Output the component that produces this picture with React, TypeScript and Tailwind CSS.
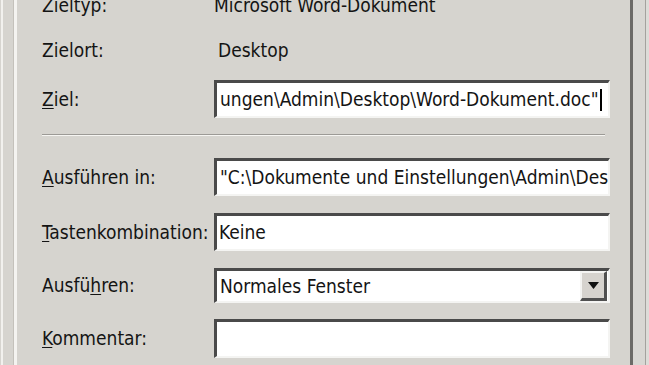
const font = { fontFamily: "'DejaVu Sans Condensed', 'Liberation Sans', sans-serif" };

function Field({ children, combo }: { children?: React.ReactNode; combo?: boolean }) {
  return (
    <div className="flex h-full w-[396px] items-center overflow-hidden border-t-[3px] border-l-[3px] border-r-2 border-b-2 border-t-[#4a4a4a] border-l-[#4a4a4a] border-r-[#f4f4f2] border-b-[#f4f4f2] bg-white">
      <div className="flex min-w-0 flex-1 items-center overflow-hidden whitespace-nowrap pl-[2px]">{children}</div>
      {combo && (
        <div className="mr-[1px] flex h-[30px] w-[27px] shrink-0 items-center justify-center border-t-2 border-l-2 border-r-[3px] border-b-[3px] border-t-[#f4f4f2] border-l-[#f4f4f2] border-r-[#505050] border-b-[#505050] bg-[#d6d3ce]">
          <svg width="11" height="7" viewBox="0 0 11 7">
            <path d="M0 0h11L5.5 7z" fill="#111" />
          </svg>
        </div>
      )}
    </div>
  );
}

function Row({ label, className, children }: { label: React.ReactNode; className: string; children: React.ReactNode }) {
  return (
    <div className={`flex items-center ${className}`}>
      <div className="w-[172px] shrink-0 whitespace-nowrap">{label}</div>
      {children}
    </div>
  );
}

export default function App() {
  return (
    <div
      className="flex h-[365px] w-[649px] overflow-hidden bg-[#d6d4cf] text-[19px] text-[#141414]"
      style={font}
    >
      {/* left frame lines */}
      <div className="ml-[1px] w-[2px] bg-[#f2f1ee]" />
      <div className="ml-[10px] w-[1px] bg-[#c4c1bb]" />
      <div className="w-[3px] bg-[#f4f3f0]" />

      <div className="ml-[25px] flex w-[568px] flex-col">
        <Row label="Zieltyp:" className="-mt-[12px] h-[34px]">
          <span>Microsoft Word-Dokument</span>
        </Row>
        <Row label="Zielort:" className="h-[56px]">
          <span className="pl-[4px]">Desktop</span>
        </Row>
        <Row label={<><u className="underline-offset-2">Z</u>iel:</>} className="mt-[2px] h-[38px]">
          <Field>
            <span className="pl-[1px]">ungen\Admin\Desktop\Word-Dokument.doc"</span>
            <span className="ml-[1px] h-[22px] w-[2px] bg-black" />
          </Field>
        </Row>
        <div className="mt-[16px] mr-[5px] h-[2px] border-t border-b border-t-[#9c9a96] border-b-[#f6f5f2]" />
        <Row label={<><u className="underline-offset-2">A</u>usführen in:</>} className="mt-[22px] h-[38px]">
          <Field>
            <span className="pl-[1px]">"C:\Dokumente und Einstellungen\Admin\Desktop\Word-Dokument.doc"</span>
          </Field>
        </Row>
        <Row label={<><u className="underline-offset-2">T</u>astenkombination:</>} className="mt-[17px] h-[38px]">
          <Field>
            <span>Keine</span>
          </Field>
        </Row>
        <Row label={<>Ausfü<u className="underline-offset-2">h</u>ren:</>} className="mt-[17px] h-[35px]">
          <Field combo>
            <span className="pl-[1px]">Normales Fenster</span>
          </Field>
        </Row>
        <Row label={<><u className="underline-offset-2">K</u>ommentar:</>} className="mt-[16px] h-[39px]">
          <Field />
        </Row>
      </div>

      {/* right frame lines */}
      <div className="ml-[20px] w-[3px] bg-[#6b6a67]" />
      <div className="w-[12px] bg-[#d8d7d3]" />
      <div className="w-[1px] bg-[#a4a29e]" />
      <div className="flex-1 bg-[#dddcd8]" />
    </div>
  );
}
